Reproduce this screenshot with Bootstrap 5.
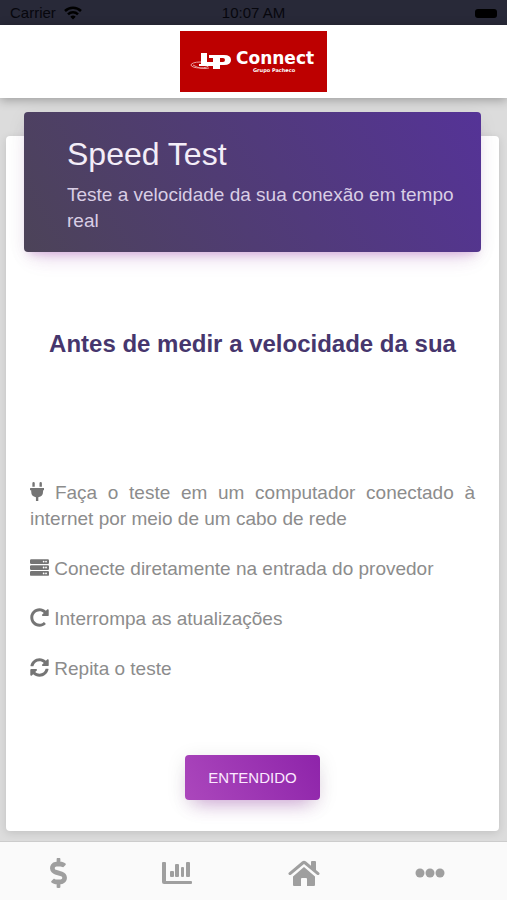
<!DOCTYPE html>
<html lang="pt-BR">
<head>
<meta charset="utf-8">
<meta name="viewport" content="width=device-width, initial-scale=1">
<title>Speed Test</title>
<link href="https://cdn.jsdelivr.net/npm/bootstrap@5.3.0/dist/css/bootstrap.min.css" rel="stylesheet">
<style>
body{background:#dcdcdc;font-family:"Liberation Sans",Arial,sans-serif;color:#8c8c8c}
.status-bar{background:#282938;color:#07070d;height:25px;font-size:15px;line-height:26px;padding:0 10px}
.battery{width:22px;height:9px;border-radius:3px;background:#000}
.brand-bar{background:#fff;box-shadow:0 2px 10px rgba(0,0,0,.3);height:73px}
.panel{background:#fff;border-radius:4px;margin:38px 8px 10px 6px;padding:0 18px;box-shadow:0 2px 8px rgba(0,0,0,.12)}
.banner{margin-top:-24px;border-radius:4px;padding:22px 24px 18px 43px;color:#d9cee5;background:linear-gradient(60deg,#4c4358,#553397);box-shadow:0 12px 20px -10px rgba(156,39,176,.25),0 4px 20px rgba(0,0,0,.06),0 7px 8px -5px rgba(156,39,176,.2)}
.banner h1{font-size:32px;line-height:40px;color:#f3edf8;font-weight:300}
.banner p{font-size:19px;line-height:26px}
.lead-title{font-size:24px;line-height:32px;padding-top:28px;font-weight:700;color:#46366d}
.tips{font-size:19px;line-height:26px;padding:0 6px;text-align:justify}
.tips li{margin-bottom:24px}
.tips svg{height:19px;fill:#757575;vertical-align:-2px}
.btn-ok{color:#fbe9ff;background:linear-gradient(60deg,#ab47bc,#8e24aa);border:0;border-radius:4px;font-size:15px;line-height:21px;padding:12px 23px;box-shadow:0 12px 20px -10px rgba(156,39,176,.4),0 4px 20px rgba(0,0,0,.1)}
.btn-ok:hover{color:#fff}
.action-row{padding-top:25px}
.tab-bar{background:#fafafa;border-top:1px solid #ccc;height:59px;padding:4px 62px 0 50px}
.tab-bar svg{fill:#9f9f9f;display:block}
</style>
<script src="https://cdn.jsdelivr.net/npm/bootstrap@5.3.0/dist/js/bootstrap.bundle.min.js"></script>
</head>
<body class="d-flex flex-column min-vh-100">
<div class="status-bar row g-0">
  <div class="col d-flex align-items-center gap-2"><span>Carrier</span>
    <svg width="18" height="14" viewBox="0 0 18 14" fill="none" stroke="#000" stroke-width="2.5" aria-hidden="true"><path d="M1 5a11.500 11.500 0 0 1 16 0M4 8.300a7.200 7.200 0 0 1 10 0"/><path d="M6.300 10.700a4 4 0 0 1 5.400 0L9 13.600z" fill="#000" stroke="none"/></svg>
  </div>
  <div class="col text-center">10:07 AM</div>
  <div class="col d-flex align-items-center justify-content-end"><span class="battery"></span></div>
</div>
<header class="brand-bar d-flex justify-content-center align-items-center">
  <svg width="147" height="61" viewBox="0 0 147 61" role="img" aria-label="LP Connect Grupo Pacheco">
    <rect width="147" height="61" fill="#bd0000"/>
    <g fill="none" stroke="#e9a0a0"><ellipse cx="20" cy="34" rx="9" ry="3"/><path d="M13 34q8 5 16 3"/></g>
    <g fill="#fff" font-family="DejaVu Sans" font-weight="700">
      <path d="M21 22h6v9h8v4H19v-2h2z"/>
      <path fill-rule="evenodd" d="M29 24h15q7 0 7 5t-7 5h-4v4h-7V27h-4zM40 27v4h3q2 0 2-2t-2-2z"/>
      <text x="56" y="33" font-size="17">Connect</text>
      <text x="73" y="41" font-size="5">Grupo Pacheco</text>
    </g>
  </svg>
</header>
<main class="panel flex-grow-1">
  <div class="banner">
    <h1 class="mb-2">Speed Test</h1>
    <p class="mb-0">Teste a velocidade da sua conexão em tempo real</p>
  </div>
  <h2 class="lead-title text-center mb-0 mt-5">Antes de medir a velocidade da sua</h2>
  <ul class="tips list-unstyled mb-0 mt-5 pt-5">
    <li class="pt-4"><svg viewBox="0 0 384 512" aria-hidden="true"><path d="M320 32a32 32 0 0 0-64 0v96h64Zm48 128H16a16 16 0 0 0-16 16v32a16 16 0 0 0 16 16h16v32a160 160 0 0 0 128 156.800V512h64v-99.200A160 160 0 0 0 352 256v-32h16a16 16 0 0 0 16-16v-32a16 16 0 0 0-16-16ZM128 32a32 32 0 0 0-64 0v96h64Z"/></svg> Faça o teste em um computador conectado à internet por meio de um cabo de rede</li>
    <li><svg viewBox="0 0 512 512" aria-hidden="true"><path fill-rule="evenodd" d="M32 32h448q32 0 32 32v64q0 32-32 32H32q-32 0-32-32V64q0-32 32-32zm400 40a24 24 0 1 0 0 48 24 24 0 0 0 0-48zm-64 0a24 24 0 1 0 0 48 24 24 0 0 0 0-48zM32 192h448q32 0 32 32v64q0 32-32 32H32q-32 0-32-32v-64q0-32 32-32zm400 40a24 24 0 1 0 0 48 24 24 0 0 0 0-48zm-64 0a24 24 0 1 0 0 48 24 24 0 0 0 0-48zM32 352h448q32 0 32 32v64q0 32-32 32H32q-32 0-32-32v-64q0-32 32-32zm400 40a24 24 0 1 0 0 48 24 24 0 0 0 0-48zm-64 0a24 24 0 1 0 0 48 24 24 0 0 0 0-48z"/></svg> Conecte diretamente na entrada do provedor</li>
    <li><svg viewBox="0 0 512 512" aria-hidden="true"><path d="M256.455 8c66.269.119 126.437 26.233 170.859 68.685l35.715-35.715C478.149 25.851 504 36.559 504 57.941V192c0 13.255-10.745 24-24 24H345.941c-21.382 0-32.090-25.851-16.971-40.971l41.750-41.750c-30.864-28.899-70.801-44.907-113.230-45.273-92.398-.798-170.283 73.977-169.484 169.442C88.764 348.009 162.184 424 256 424c41.127 0 79.997-14.678 110.629-41.556 4.743-4.161 11.906-3.908 16.368.553l39.662 39.662c4.872 4.872 4.631 12.815-.482 17.433C378.202 479.813 319.926 504 256 504 119.034 504 8.001 392.967 8 256.002 7.999 119.193 119.646 7.755 256.455 8z"/></svg> Interrompa as atualizações</li>
    <li><svg viewBox="0 0 512 512" aria-hidden="true"><path d="M370.720 133.280C339.458 104.008 298.888 87.962 255.848 88c-77.458.068-144.328 53.178-162.791 126.850-1.344 5.363-6.122 9.150-11.651 9.150H24.103c-7.498 0-13.194-6.807-11.807-14.176C33.933 94.924 134.813 8 256 8c66.448 0 126.791 26.136 171.315 68.685L463.030 40.970C478.149 25.851 504 36.559 504 57.941V192c0 13.255-10.745 24-24 24H345.941c-21.382 0-32.090-25.851-16.971-40.971l41.750-41.750zM32 296h134.059c21.382 0 32.090 25.851 16.971 40.971l-41.750 41.750c31.262 29.273 71.835 45.319 114.876 45.280 77.418-.070 144.315-53.144 162.787-126.849 1.344-5.363 6.122-9.150 11.651-9.150h57.304c7.498 0 13.194 6.807 11.807 14.176C478.067 417.076 377.187 504 256 504c-66.448 0-126.791-26.136-171.315-68.685L48.970 471.030C33.851 486.149 8 475.441 8 454.059V320c0-13.255 10.745-24 24-24z"/></svg> Repita o teste</li>
  </ul>
  <div class="action-row text-center mt-5"><button type="button" class="btn btn-ok">ENTENDIDO</button></div>
</main>
<nav class="tab-bar d-flex justify-content-between align-items-center" aria-label="Principal">
  <a href="#pagamentos" aria-label="Pagamentos"><svg width="17" height="30" viewBox="0 0 288 512"><path d="M209.200 233.400l-108-31.600C88.700 198.200 80 186.500 80 173.500c0-16.300 13.200-29.500 29.500-29.500h66.300c12.200 0 24.200 3.700 34.200 10.500 6.100 4.100 14.300 3.100 19.500-2l34.800-34c7.100-6.900 6.100-18.400-1.800-24.500C238 74.800 207.400 64.100 176 64V16c0-8.800-7.200-16-16-16h-32c-8.800 0-16 7.200-16 16v48h-2.500C45.800 64-5.400 118.700.5 183.600c4.200 46.100 39.400 83.600 83.800 96.600l102.500 30c12.500 3.700 21.200 15.300 21.200 28.300 0 16.300-13.200 29.500-29.500 29.500h-66.300C100 368 88 364.300 78 357.500c-6.100-4.100-14.300-3.100-19.500 2l-34.800 34c-7.100 6.900-6.100 18.400 1.800 24.500 24.500 19.200 55.100 29.900 86.500 30v48c0 8.800 7.200 16 16 16h32c8.800 0 16-7.200 16-16v-48.200c46.600-.9 90.300-28.600 105.700-72.700 21.500-61.600-14.600-124.800-72.500-141.700z"/></svg></a>
  <a href="#consumo" aria-label="Consumo"><svg width="30" height="23" viewBox="0 0 30 23"><path d="M1 0h2q1 0 1 1v18h25q1 0 1 1v1q0 1-1 1H2q-2 0-2-2V1q0-1 1-1z"/><rect x="8" y="9" width="4" height="6" rx="1"/><rect x="13" y="2" width="4" height="13" rx="1"/><rect x="19" y="5" width="3" height="10" rx="1"/><rect x="24" y="0" width="4" height="15" rx="1"/></svg></a>
  <a href="#inicio" aria-label="Início"><svg width="32" height="27" viewBox="0 0 32 27"><path d="M16 7 27 16.500V25q0 1-1 1h-7v-7q0-1-1-1h-4q-1 0-1 1v7H6q-1 0-1-1v-8.500z"/><path d="M1 12.500 14 1.500q2-1.500 4 0l5 4.200V2q0-1 1-1h3q1 0 1 1v8l3 2.500q1 1 .2 2t-2.200.2L16 4 3 14.700q-1.300.8-2.200-.2t.2-2z"/></svg></a>
  <a href="#mais" aria-label="Mais"><svg width="30" height="10" viewBox="0 0 30 10"><circle cx="5" cy="5" r="4.500"/><circle cx="15" cy="5" r="4.500"/><circle cx="25" cy="5" r="4.500"/></svg></a>
</nav>
</body>
</html>
